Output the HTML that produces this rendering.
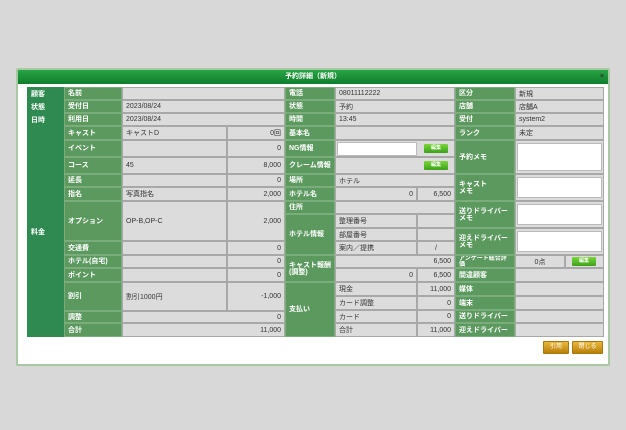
<!DOCTYPE html><html><head><meta charset="utf-8"><style>
body{margin:0;width:626px;height:430px;background:#d8d8d8;position:relative;overflow:hidden;font-family:"Liberation Sans","Noto Sans CJK JP",sans-serif;font-size:7px}
.dlg{position:absolute;left:16px;top:68px;width:590px;height:294px;background:#fff;border:2px solid #a9c9a3;border-radius:2px}
.tt{position:absolute;left:18px;top:70px;width:590px;height:14px;background:linear-gradient(#2aa445,#0f7d2c);color:#fff;font-weight:bold;text-align:center;line-height:14px;font-size:7px}
.c{position:absolute;box-sizing:border-box;border:1px solid #a8a8a8;padding:0 3px;display:flex;align-items:center;white-space:nowrap;overflow:hidden}
.d{background:#2e8a50;color:#fff;font-weight:bold;border-color:#2e8a50}
.l{background:#5c995f;color:#fff;font-weight:bold;border-color:#7aac7c;line-height:7px;white-space:normal}
.v{background:#dcdcdc;color:#333}
.r{justify-content:flex-end}
.w{background:#fff}
.b{position:absolute;background:linear-gradient(#7ad63a,#3ba01a);color:#fff;font-weight:bold;font-size:5px;text-align:center;line-height:9px;width:24px;height:9px;border-radius:1px}
.o{position:absolute;background:linear-gradient(#e9b83a,#b97f0a);color:#fff;font-size:6px;text-align:center;line-height:11px;height:11px;border-radius:1px;border:1px solid #a77a10}
</style></head><body>
<div class="dlg"></div>
<div class="tt">予約詳細（新規）<span style="position:absolute;right:4px;color:#333">×</span></div>

<div class="c d" style="left:27px;top:87px;width:37px;height:13px">顧客</div>
<div class="c d" style="left:27px;top:100px;width:37px;height:13px">状態</div>
<div class="c d" style="left:27px;top:113px;width:37px;height:13px">日時</div>
<div class="c d" style="left:27px;top:126px;width:37px;height:211px">料金</div>

<div class="c l" style="left:64px;top:87px;width:58px;height:13px">名前</div>
<div class="c l" style="left:64px;top:100px;width:58px;height:13px">受付日</div>
<div class="c l" style="left:64px;top:113px;width:58px;height:13px">利用日</div>
<div class="c l" style="left:64px;top:126px;width:58px;height:14px">キャスト</div>
<div class="c l" style="left:64px;top:140px;width:58px;height:17px">イベント</div>
<div class="c l" style="left:64px;top:157px;width:58px;height:17px">コース</div>
<div class="c l" style="left:64px;top:174px;width:58px;height:13px">延長</div>
<div class="c l" style="left:64px;top:187px;width:58px;height:14px">指名</div>
<div class="c l" style="left:64px;top:201px;width:58px;height:40px">オプション</div>
<div class="c l" style="left:64px;top:241px;width:58px;height:14px">交通費</div>
<div class="c l" style="left:64px;top:255px;width:58px;height:13px">ホテル(自宅)</div>
<div class="c l" style="left:64px;top:268px;width:58px;height:14px">ポイント</div>
<div class="c l" style="left:64px;top:282px;width:58px;height:29px">割引</div>
<div class="c l" style="left:64px;top:311px;width:58px;height:12px">調整</div>
<div class="c l" style="left:64px;top:323px;width:58px;height:14px">合計</div>

<div class="c v" style="left:122px;top:87px;width:163px;height:13px"></div>
<div class="c v" style="left:122px;top:100px;width:163px;height:13px">2023/08/24</div>
<div class="c v" style="left:122px;top:113px;width:163px;height:13px">2023/08/24</div>
<div class="c v" style="left:122px;top:126px;width:105px;height:14px">キャストD</div>
<div class="c v r" style="left:227px;top:126px;width:58px;height:14px">0回</div>
<div class="c v" style="left:122px;top:140px;width:105px;height:17px"></div>
<div class="c v r" style="left:227px;top:140px;width:58px;height:17px">0</div>
<div class="c v" style="left:122px;top:157px;width:105px;height:17px">45</div>
<div class="c v r" style="left:227px;top:157px;width:58px;height:17px">8,000</div>
<div class="c v" style="left:122px;top:174px;width:105px;height:13px"></div>
<div class="c v r" style="left:227px;top:174px;width:58px;height:13px">0</div>
<div class="c v" style="left:122px;top:187px;width:105px;height:14px">写真指名</div>
<div class="c v r" style="left:227px;top:187px;width:58px;height:14px">2,000</div>
<div class="c v" style="left:122px;top:201px;width:105px;height:40px">OP-B,OP-C</div>
<div class="c v r" style="left:227px;top:201px;width:58px;height:40px">2,000</div>
<div class="c v" style="left:122px;top:241px;width:105px;height:14px"></div>
<div class="c v r" style="left:227px;top:241px;width:58px;height:14px">0</div>
<div class="c v" style="left:122px;top:255px;width:105px;height:13px"></div>
<div class="c v r" style="left:227px;top:255px;width:58px;height:13px">0</div>
<div class="c v" style="left:122px;top:268px;width:105px;height:14px"></div>
<div class="c v r" style="left:227px;top:268px;width:58px;height:14px">0</div>
<div class="c v" style="left:122px;top:282px;width:105px;height:29px">割引1000円</div>
<div class="c v r" style="left:227px;top:282px;width:58px;height:29px">-1,000</div>
<div class="c v r" style="left:122px;top:311px;width:163px;height:12px">0</div>
<div class="c v r" style="left:122px;top:323px;width:163px;height:14px">11,000</div>

<div class="c l" style="left:285px;top:87px;width:50px;height:13px">電話</div>
<div class="c l" style="left:285px;top:100px;width:50px;height:13px">状態</div>
<div class="c l" style="left:285px;top:113px;width:50px;height:13px">時間</div>
<div class="c l" style="left:285px;top:126px;width:50px;height:14px">基本名</div>
<div class="c l" style="left:285px;top:140px;width:50px;height:17px">NG情報</div>
<div class="c l" style="left:285px;top:157px;width:50px;height:17px">クレーム情報</div>
<div class="c l" style="left:285px;top:174px;width:50px;height:13px">場所</div>
<div class="c l" style="left:285px;top:187px;width:50px;height:14px">ホテル名</div>
<div class="c l" style="left:285px;top:201px;width:50px;height:13px">住所</div>
<div class="c l" style="left:285px;top:214px;width:50px;height:41px">ホテル情報</div>
<div class="c l" style="left:285px;top:255px;width:50px;height:27px">キャスト報酬(調整)</div>
<div class="c l" style="left:285px;top:282px;width:50px;height:55px">支払い</div>

<div class="c v" style="left:335px;top:87px;width:120px;height:13px">08011112222</div>
<div class="c v" style="left:335px;top:100px;width:120px;height:13px">予約</div>
<div class="c v" style="left:335px;top:113px;width:120px;height:13px">13:45</div>
<div class="c v" style="left:335px;top:126px;width:120px;height:14px"></div>
<div class="c v" style="left:335px;top:140px;width:120px;height:17px"><div style="position:absolute;left:1px;top:1px;width:80px;height:14px;background:#fff;border:1px solid #bbb;box-sizing:border-box"></div></div>
<div class="c v" style="left:335px;top:157px;width:120px;height:17px"></div>
<div class="b" style="left:424px;top:144px">編集</div>
<div class="b" style="left:424px;top:161px">編集</div>
<div class="c v" style="left:335px;top:174px;width:120px;height:13px">ホテル</div>
<div class="c v r" style="left:335px;top:187px;width:82px;height:14px">0</div>
<div class="c v r" style="left:417px;top:187px;width:38px;height:14px">6,500</div>
<div class="c v" style="left:335px;top:201px;width:120px;height:13px"></div>
<div class="c v" style="left:335px;top:214px;width:82px;height:14px">整理番号</div>
<div class="c v" style="left:417px;top:214px;width:38px;height:14px"></div>
<div class="c v" style="left:335px;top:228px;width:82px;height:13px">部屋番号</div>
<div class="c v" style="left:417px;top:228px;width:38px;height:13px"></div>
<div class="c v" style="left:335px;top:241px;width:82px;height:14px">案内／提携</div>
<div class="c v" style="left:417px;top:241px;width:38px;height:14px;justify-content:center">/</div>
<div class="c v r" style="left:335px;top:255px;width:120px;height:13px">6,500</div>
<div class="c v r" style="left:335px;top:268px;width:82px;height:14px">0</div>
<div class="c v r" style="left:417px;top:268px;width:38px;height:14px">6,500</div>
<div class="c v" style="left:335px;top:282px;width:82px;height:14px">現金</div>
<div class="c v r" style="left:417px;top:282px;width:38px;height:14px">11,000</div>
<div class="c v" style="left:335px;top:296px;width:82px;height:14px">カード調整</div>
<div class="c v r" style="left:417px;top:296px;width:38px;height:14px">0</div>
<div class="c v" style="left:335px;top:310px;width:82px;height:13px">カード</div>
<div class="c v r" style="left:417px;top:310px;width:38px;height:13px">0</div>
<div class="c v" style="left:335px;top:323px;width:82px;height:14px">合計</div>
<div class="c v r" style="left:417px;top:323px;width:38px;height:14px">11,000</div>

<div class="c l" style="left:455px;top:87px;width:60px;height:13px">区分</div>
<div class="c l" style="left:455px;top:100px;width:60px;height:13px">店舗</div>
<div class="c l" style="left:455px;top:113px;width:60px;height:13px">受付</div>
<div class="c l" style="left:455px;top:126px;width:60px;height:14px">ランク</div>
<div class="c l" style="left:455px;top:140px;width:60px;height:34px">予約メモ</div>
<div class="c l" style="left:455px;top:174px;width:60px;height:27px">キャスト<br>メモ</div>
<div class="c l" style="left:455px;top:201px;width:60px;height:27px">送りドライバーメモ</div>
<div class="c l" style="left:455px;top:228px;width:60px;height:27px">迎えドライバーメモ</div>
<div class="c l" style="left:455px;top:255px;width:60px;height:13px;font-size:6px;line-height:6px">アンケート総合評価</div>
<div class="c l" style="left:455px;top:268px;width:60px;height:14px">間違顧客</div>
<div class="c l" style="left:455px;top:282px;width:60px;height:14px">媒体</div>
<div class="c l" style="left:455px;top:296px;width:60px;height:14px">端末</div>
<div class="c l" style="left:455px;top:310px;width:60px;height:13px">送りドライバー</div>
<div class="c l" style="left:455px;top:323px;width:60px;height:14px">迎えドライバー</div>

<div class="c v" style="left:515px;top:87px;width:89px;height:13px">新規</div>
<div class="c v" style="left:515px;top:100px;width:89px;height:13px">店舗A</div>
<div class="c v" style="left:515px;top:113px;width:89px;height:13px">system2</div>
<div class="c v" style="left:515px;top:126px;width:89px;height:14px">未定</div>
<div class="c v" style="left:515px;top:140px;width:89px;height:34px"><div style="position:absolute;left:1px;top:2px;right:1px;bottom:2px;background:#fff;border:1px solid #bbb"></div></div>
<div class="c v" style="left:515px;top:174px;width:89px;height:27px"><div style="position:absolute;left:1px;top:2px;right:1px;bottom:2px;background:#fff;border:1px solid #bbb"></div></div>
<div class="c v" style="left:515px;top:201px;width:89px;height:27px"><div style="position:absolute;left:1px;top:2px;right:1px;bottom:2px;background:#fff;border:1px solid #bbb"></div></div>
<div class="c v" style="left:515px;top:228px;width:89px;height:27px"><div style="position:absolute;left:1px;top:2px;right:1px;bottom:2px;background:#fff;border:1px solid #bbb"></div></div>
<div class="c v" style="left:515px;top:255px;width:50px;height:13px;justify-content:center">0点</div>
<div class="c v" style="left:565px;top:255px;width:39px;height:13px"></div>
<div class="b" style="left:572px;top:257px">編集</div>
<div class="c v" style="left:515px;top:268px;width:89px;height:14px"></div>
<div class="c v" style="left:515px;top:282px;width:89px;height:14px"></div>
<div class="c v" style="left:515px;top:296px;width:89px;height:14px"></div>
<div class="c v" style="left:515px;top:310px;width:89px;height:13px"></div>
<div class="c v" style="left:515px;top:323px;width:89px;height:14px"></div>

<div class="o" style="left:543px;top:341px;width:24px">引用</div>
<div class="o" style="left:572px;top:341px;width:29px">閉じる</div>
</body></html>
